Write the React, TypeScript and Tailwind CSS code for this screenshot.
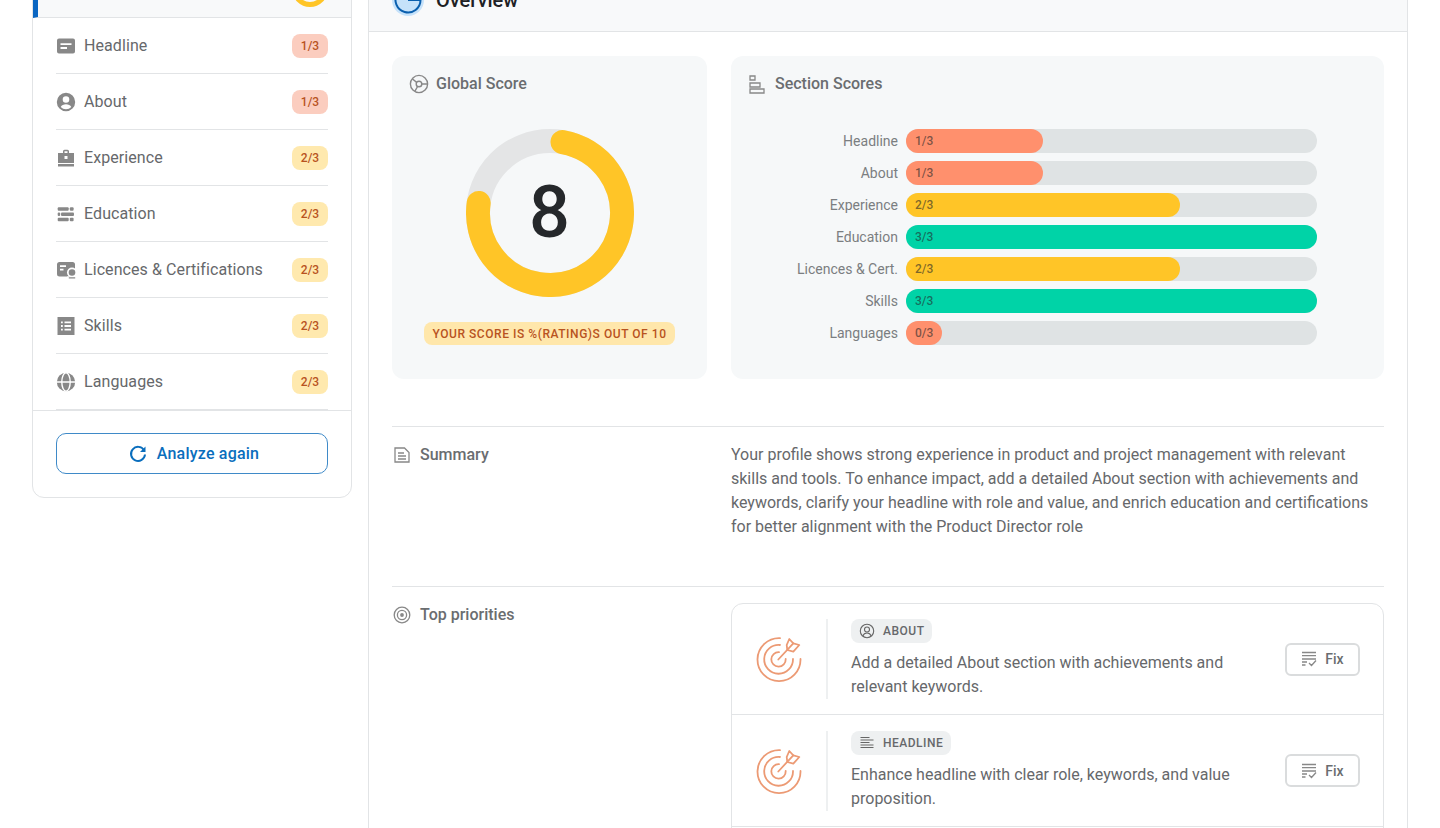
import { ReactNode } from 'react';

const RED_BADGE = 'bg-[#fbcdbf] text-[#b8531f]';
const YELLOW_BADGE = 'bg-[#ffe9ae] text-[#b8531f]';

const IconHeadline = () => (
  <svg width="20" height="20" viewBox="0 0 20 20" fill="#888">
    <path fillRule="evenodd" d="M3 2.500h14A2 2 0 0 1 19 4.500v11a2 2 0 0 1-2 2H3a2 2 0 0 1-2-2v-11a2 2 0 0 1 2-2zM4.500 7.200v1.900H15.500V7.200zM4.500 11v1.900H11V11z" />
  </svg>
);

const IconAbout = () => (
  <svg width="20" height="20" viewBox="0 0 20 20" fill="#888">
    <path fillRule="evenodd" d="M10 .8a9.200 9.200 0 1 1 0 18.400A9.200 9.200 0 0 1 10 .8zM10 4.200a3.300 3.300 0 1 0 0 6.600a3.300 3.300 0 0 0 0-6.600zM10 12.300c-2.400 0-4.400 1-5.300 2.600a7 7 0 0 0 10.600 0c-.9-1.600-2.900-2.600-5.300-2.600z" />
  </svg>
);

const IconExperience = () => (
  <svg width="20" height="20" viewBox="0 0 20 20" fill="#888">
    <path fillRule="evenodd" d="M7 3.200A1.500 1.500 0 0 1 8.500 1.700h3A1.500 1.500 0 0 1 13 3.200V5h5v10H2V5h5zM8.500 3.200V5h3V3.200zM8.500 8v3h3V8z" />
    <path d="M2 16h16v2.500H2z" />
  </svg>
);

const IconEducation = () => (
  <svg width="20" height="20" viewBox="0 0 20 20" fill="#888">
    <rect x="1.700" y="3.200" width="11" height="3.500" rx="1" />
    <rect x="13.800" y="3.200" width="3.800" height="3.500" rx="1" />
    <rect x="1.700" y="8.500" width="2.500" height="3.500" rx="1" />
    <rect x="5" y="8.500" width="13" height="3.500" rx="1" />
    <rect x="1.700" y="13.700" width="11" height="3.500" rx="1" />
    <rect x="13.800" y="13.700" width="3.800" height="3.500" rx="1" />
  </svg>
);

const IconLicences = () => (
  <svg width="20" height="20" viewBox="0 0 20 20" fill="#888">
    <rect x="1" y="2" width="18" height="14.500" rx="2.500" />
    <circle cx="16" cy="12.500" r="5" fill="#fff" />
    <path d="M11 16.500h9V20h-9z" fill="#fff" />
    <circle cx="16" cy="12.500" r="3.300" />
    <path d="M12.800 17.300h6.400v1.300h-6.400z" />
    <path d="M4 5.200h6v1.800H4zM4 8.700h3.500v1.800H4z" fill="#fff" />
  </svg>
);

const IconSkills = () => (
  <svg width="20" height="20" viewBox="0 0 20 20" fill="#888">
    <path fillRule="evenodd" d="M1.500 1h17v18h-17zM5 5.500v1.800h1.800V5.500zM8.500 5.500v1.800H15V5.500zM5 9.100v1.800h1.800V9.100zM8.500 9.100v1.800H15V9.100zM5 12.700v1.800h1.800v-1.800zM8.500 12.700v1.800H15v-1.800z" />
  </svg>
);

const IconLanguages = () => (
  <svg width="20" height="20" viewBox="0 0 20 20" fill="none">
    <circle cx="10" cy="10" r="9.200" fill="#888" />
    <ellipse cx="10" cy="10" rx="4.200" ry="9.200" stroke="#fff" strokeWidth="1.400" />
    <path d="M0 10h20" stroke="#fff" strokeWidth="1.600" />
  </svg>
);

const IconRefresh = () => (
  <svg width="18" height="18" viewBox="0 0 18 18" fill="none" stroke="#0a6ebd" strokeWidth="2">
    <path d="M15 5.200A7 7 0 1 0 16 9.500" />
    <path d="M16.500 1.500v5.500h-5.500z" fill="#0a6ebd" stroke="none" />
  </svg>
);

const IconGlobal = () => (
  <svg width="20" height="20" viewBox="0 0 20 20" fill="none" stroke="#888" strokeWidth="1.400">
    <circle cx="10" cy="10" r="8.600" />
    <circle cx="10" cy="10" r="2.800" />
    <path d="M7.700 8.400L3.500 5M12.800 10h5.500M8.600 12.500l-2.800 4.800" />
  </svg>
);

const IconBars = () => (
  <svg width="16" height="20" viewBox="0 0 16 20" fill="none" stroke="#888" strokeWidth="1.300">
    <path d="M1 2h5v4H1zM1 9h10v4H1zM1 15h14v4H1z" />
  </svg>
);

const IconSummary = () => (
  <svg width="18" height="18" viewBox="0 0 18 18" fill="none" stroke="#888" strokeWidth="1.300">
    <path d="M2 2h9.500L16 6.500V16H2z" />
    <path d="M5 7h6M5 10h8M5 13h8" />
  </svg>
);

const IconPriorities = () => (
  <svg width="18" height="18" viewBox="0 0 18 18" fill="none" stroke="#888" strokeWidth="1.300">
    <circle cx="9" cy="9" r="7.800" />
    <circle cx="9" cy="9" r="4.600" />
    <circle cx="9" cy="9" r="1.900" fill="#888" stroke="none" />
  </svg>
);

const IconTarget = () => (
  <svg width="46" height="46" viewBox="0 0 46 46" fill="none" stroke="#ec9a74" strokeWidth="1.800" strokeLinecap="round" strokeLinejoin="round">
    <path d="M24 2.100A21.500 21.500 0 1 0 44.500 23" />
    <path d="M24 9A14.400 14.400 0 1 0 37 23" />
    <path d="M23 16.200A7.200 7.200 0 1 0 29.700 23" />
    <path d="M22.300 23.500L37.300 7.300" />
    <path d="M30.700 9l2.600-6 4 4.300 6 1.700-6 6.700-6-1.700z" />
  </svg>
);

const IconUserSmall = () => (
  <svg width="16" height="16" viewBox="0 0 16 16" fill="none" stroke="#666" strokeWidth="1.100">
    <circle cx="8" cy="8" r="6.700" />
    <circle cx="8" cy="6.500" r="2.500" />
    <path d="M3.800 13c.7-1.900 2.300-3 4.200-3s3.500 1.100 4.200 3" />
  </svg>
);

const IconAlign = () => (
  <svg width="16" height="16" viewBox="0 0 16 16" fill="none" stroke="#666" strokeWidth="1.200">
    <path d="M1.500 2.500h9M1.500 5h13M1.500 7.500h9M1.500 10h13M1.500 12.500h13" />
  </svg>
);

const IconFix = () => (
  <svg width="16" height="16" viewBox="0 0 16 16" fill="none" stroke="#888" strokeWidth="1.300">
    <path d="M1 1.500h14M1 4.700h14M1 8h14M1 11h5M1 14h3.500M8 12l2.500 2.500 4.500-5" />
  </svg>
);

const navItems: { label: string; score: string; icon: ReactNode; badge: string }[] = [
  { label: 'Headline', score: '1/3', icon: <IconHeadline />, badge: RED_BADGE },
  { label: 'About', score: '1/3', icon: <IconAbout />, badge: RED_BADGE },
  { label: 'Experience', score: '2/3', icon: <IconExperience />, badge: YELLOW_BADGE },
  { label: 'Education', score: '2/3', icon: <IconEducation />, badge: YELLOW_BADGE },
  { label: 'Licences & Certifications', score: '2/3', icon: <IconLicences />, badge: YELLOW_BADGE },
  { label: 'Skills', score: '2/3', icon: <IconSkills />, badge: YELLOW_BADGE },
  { label: 'Languages', score: '2/3', icon: <IconLanguages />, badge: YELLOW_BADGE },
];

const sectionScores = [
  { label: 'Headline', score: '1/3', width: 137, color: 'bg-[#ff906d]' },
  { label: 'About', score: '1/3', width: 137, color: 'bg-[#ff906d]' },
  { label: 'Experience', score: '2/3', width: 274, color: 'bg-[#ffc527]' },
  { label: 'Education', score: '3/3', width: 411, color: 'bg-[#00d3a7]' },
  { label: 'Licences & Cert.', score: '2/3', width: 274, color: 'bg-[#ffc527]' },
  { label: 'Skills', score: '3/3', width: 411, color: 'bg-[#00d3a7]' },
  { label: 'Languages', score: '0/3', width: 36, color: 'bg-[#ff906d]' },
];

const priorities = [
  {
    tag: 'ABOUT',
    icon: <IconUserSmall />,
    text: 'Add a detailed About section with achievements and relevant keywords.',
  },
  {
    tag: 'HEADLINE',
    icon: <IconAlign />,
    text: 'Enhance headline with clear role, keywords, and value proposition.',
  },
];

const Sidebar = () => (
  <aside className="w-[320px] shrink-0 self-start rounded-xl border border-[#e2e4e6] bg-white overflow-hidden">
    <div className="flex h-[57px] items-center justify-end border-b border-[#e2e4e6] border-l-[5px] border-l-[#0a66c2] bg-[#f8f9fa] pr-[23px]">
      <svg className="mb-[1px]" width="36" height="36" viewBox="0 0 36 36" fill="none">
        <circle cx="18" cy="18" r="15.500" stroke="#ffc527" strokeWidth="5" />
      </svg>
    </div>
    <div className="px-[23px]">
      {navItems.map((item) => (
        <div key={item.label} className="flex h-[56px] items-center border-b border-[#e2e4e6]">
          <span className="mr-[8px] flex w-[20px] justify-center">{item.icon}</span>
          <span className="flex-1 text-base tracking-[0.08px] text-[#66686b]">{item.label}</span>
          <span className={`flex h-[24px] w-[36px] items-center justify-center rounded-lg text-xs font-medium ${item.badge}`}>
            {item.score}
          </span>
        </div>
      ))}
    </div>
    <div className="border-t border-[#e2e4e6] px-[23px] pb-[23px] pt-[22px]">
      <button className="flex h-[41px] w-full items-center justify-center gap-[10px] rounded-[10px] border border-[#3f8ac8] pl-[4px] text-base font-medium tracking-[0.2px] text-[#0a6ebd]">
        <IconRefresh />
        Analyze again
      </button>
    </div>
  </aside>
);

const GlobalScore = () => (
  <div className="flex h-[323px] w-[315px] shrink-0 flex-col items-center rounded-xl bg-[#f6f8f9] px-[17px] pt-[16px]">
    <div className="flex w-full items-center gap-[7px]">
      <IconGlobal />
      <span className="text-base font-medium text-[#6a6d70]">Global Score</span>
    </div>
    <div className="relative mt-[33px] h-[168px] w-[168px]">
      <svg width="168" height="168" viewBox="0 0 168 168" fill="none">
        <circle cx="84" cy="84" r="72" stroke="#e4e5e6" strokeWidth="24" />
        <path d="M96.500 13.100A72 72 0 1 1 12.700 74" stroke="#ffc527" strokeWidth="24" strokeLinecap="round" />
      </svg>
      <span className="absolute inset-0 flex items-center justify-center text-[72px] font-medium text-[#25282b]">8</span>
    </div>
    <div className="mt-[25px] flex h-[23px] w-[251px] items-center justify-center rounded-lg bg-[#ffe7ab] text-xs font-medium tracking-[0.55px] text-[#b8531f]">
      YOUR SCORE IS %(RATING)S OUT OF 10
    </div>
  </div>
);

const SectionScores = () => (
  <div className="h-[323px] flex-1 rounded-xl bg-[#f6f8f9] pl-[18px] pt-[16px]">
    <div className="flex items-center gap-[10px]">
      <IconBars />
      <span className="text-base font-medium text-[#6a6d70]">Section Scores</span>
    </div>
    <div className="mt-[33px] flex flex-col gap-[8px]">
      {sectionScores.map((row) => (
        <div key={row.label} className="flex h-[24px] items-center">
          <span className="w-[149px] shrink-0 text-right text-sm text-[#7b7e81]">{row.label}</span>
          <div className="ml-[8px] h-[24px] w-[411px] rounded-full bg-[#dfe3e4]">
            <div
              className={`flex h-full items-center rounded-full pl-[9px] text-xs font-medium text-[#25282b]/60 ${row.color}`}
              style={{ width: row.width }}
            >
              {row.score}
            </div>
          </div>
        </div>
      ))}
    </div>
  </div>
);

const Main = () => (
  <main className="min-w-0 flex-1 border border-[#e2e4e6] bg-white rounded-t-xl">
    <div className="flex h-[71px] items-center gap-[12px] border-b border-[#e2e4e6] bg-[#f8f9fa] px-[23px] pt-[8px]">
      <svg width="32" height="32" viewBox="0 0 32 32" fill="none">
        <circle cx="16" cy="16" r="16" fill="#c6e2fa" />
        <path d="M28.500 16A12.500 12.500 0 1 1 25 7.300M16 16h12" stroke="#0a5fae" strokeWidth="2" />
      </svg>
      <span className="text-xl font-medium text-[#202124]">Overview</span>
    </div>
    <div className="px-[23px] pt-[24px]">
      <div className="flex gap-[24px]">
        <GlobalScore />
        <SectionScores />
      </div>

      <div className="mt-[47px] grid h-[160px] grid-cols-[339px_1fr] border-t border-[#e2e4e6] pt-[16px]">
        <div className="flex h-[24px] items-center gap-[9px] pl-[1px]">
          <IconSummary />
          <span className="text-base font-medium text-[#6a6d70]">Summary</span>
        </div>
        <p className="text-base leading-6 text-[#66686b]">
          Your profile shows strong experience in product and project management with relevant skills and tools. To enhance impact, add a detailed About section with achievements and keywords, clarify your headline with role and value, and enrich education and certifications for better alignment with the Product Director role
        </p>
      </div>

      <div className="grid grid-cols-[339px_1fr] border-t border-[#e2e4e6] pt-[16px]">
        <div className="flex h-[24px] items-center gap-[9px] pl-[1px]">
          <IconPriorities />
          <span className="text-base font-medium text-[#6a6d70]">Top priorities</span>
        </div>
        <div className="rounded-xl border border-[#e2e4e6]">
          {priorities.map((item) => (
            <div key={item.tag} className="flex h-[112px] items-center border-b border-[#e2e4e6] first:h-[111px]">
              <div className="flex h-[80px] w-[96px] shrink-0 items-center justify-center border-r-2 border-[#eef0f1]">
                <IconTarget />
              </div>
              <div className="ml-[23px] flex-1">
                <div className="flex h-[24px] w-fit items-center gap-[8px] rounded-lg bg-[#eef0f1] px-[8px] text-xs font-medium tracking-[0.5px] text-[#66686b]">
                  {item.icon}
                  {item.tag}
                </div>
                <p className="mt-[8px] w-[400px] text-base leading-6 text-[#66686b]">{item.text}</p>
              </div>
              <button className="mr-[23px] flex h-[33px] w-[75px] items-center justify-center gap-[8px] rounded-md border-2 border-[#dadcdd] text-sm font-medium text-[#6a6d70]">
                <IconFix />
                Fix
              </button>
            </div>
          ))}
          <div className="h-[112px]" />
        </div>
      </div>
    </div>
  </main>
);

export default function App() {
  return (
    <div className="h-[828px] w-[1440px] overflow-hidden bg-white font-['Roboto',sans-serif]">
      <div className="-mt-[40px] flex gap-[16px] px-[32px]">
        <Sidebar />
        <Main />
      </div>
    </div>
  );
}
